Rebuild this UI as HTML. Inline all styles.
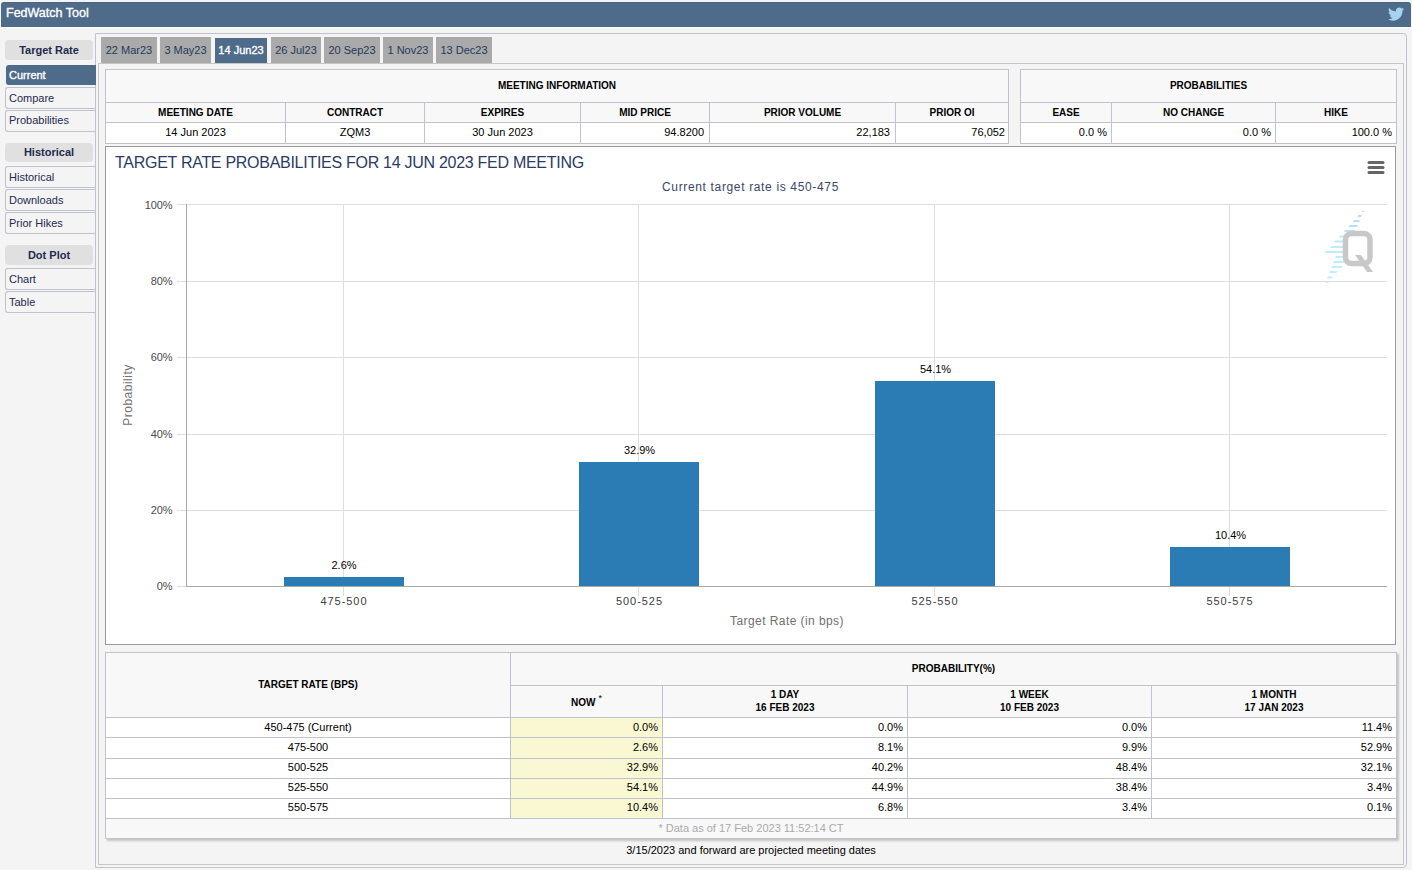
<!DOCTYPE html>
<html><head><meta charset="utf-8">
<style>
*{box-sizing:border-box;margin:0;padding:0}
html,body{width:1412px;height:870px;overflow:hidden;background:#f4f4f4;font-family:"Liberation Sans",sans-serif;position:relative}
.a{position:absolute}
#hdr{left:1px;top:2px;width:1410px;height:25px;background:#4f6b8a;border-radius:3px 3px 0 0;border-top:1px solid #4a6584;box-shadow:0 1px 0 #fff}
#hdr .t{left:5px;top:3px;color:#fff;font:12.5px "Liberation Sans",sans-serif;-webkit-text-stroke:0.35px #fff;white-space:nowrap}
.gh{left:5px;width:88px;height:20px;background:#e0e0e0;border-radius:4px;color:#1f2a50;font:bold 11px "Liberation Sans",sans-serif;text-align:center;line-height:20px}
.sb{left:5px;width:91px;height:22px;background:#f4f4f4;border:1px solid #c0c2cf;border-right:none;border-radius:3px 0 0 3px;color:#1f2a50;font:11px "Liberation Sans",sans-serif;line-height:20px;padding-left:3px}
.sb.on{z-index:2;background:#4f6b8a;border-color:#4f6b8a;color:#fff;-webkit-text-stroke:0.35px #fff;top:65px;height:20px;line-height:19px;padding-left:2px;left:6px;width:90px}
#outer{z-index:1;left:95px;top:33px;width:1312px;height:835px;border:1px solid #c0c2ce;border-radius:0 4px 4px 0}
#panel{left:98px;top:63px;width:1306px;height:802px;border:1px solid #c6c6c6;background:#f4f4f4}
.tab{top:37px;height:26px;background:#aaaaaa;color:#1f3a5a;font:11px "Liberation Sans",sans-serif;line-height:26px;text-align:center;white-space:nowrap}
.tab.on{top:38px;height:25px;background:#4f6b8a;color:#fff;-webkit-text-stroke:0.35px #fff;line-height:25px}
table{border-collapse:collapse;font-family:"Liberation Sans",sans-serif}
td,th{border:1px solid #c0c2cf;padding:0;white-space:nowrap}
.mt{position:absolute;background:#f8f8f8}
.mt th{font:bold 10px "Liberation Sans",sans-serif;color:#000;text-align:center}
.mt td{font:11px "Liberation Sans",sans-serif;color:#000;background:#fff;padding-bottom:2px}
.bt td{text-align:right;padding-right:4px;padding-bottom:2px}
.bt td:first-child{text-align:center;padding-right:0}
.bt td.y{background:#f9f8d2}
.bt tr.up td{padding-bottom:3px}
.bt sup{font-size:9px;vertical-align:top;position:relative;top:-4px;margin-left:3px;font-weight:normal}
.bt th.ft{font:11px "Liberation Sans",sans-serif;color:#aaa;padding-bottom:2px}
#chart{left:105px;top:146px;width:1291px;height:499px;border:1px solid #9a9a9a;background:#fff;overflow:hidden}
</style></head><body>
<div id="hdr" class="a"><div class="a t">FedWatch Tool</div>
<svg class="a" style="left:1387px;top:4px" width="16.5" height="14.5" viewBox="0 0 24 20"><path fill="#a7d3f3" d="M23.6 2.4c-.9.4-1.8.6-2.8.8 1-.6 1.8-1.6 2.1-2.7-.9.6-2 1-3.1 1.2C18.9.7 17.6.1 16.2.1c-2.7 0-4.8 2.2-4.8 4.8 0 .4 0 .8.1 1.1C7.4 5.8 3.9 3.9 1.5 1 1.1 1.7.9 2.5.9 3.4c0 1.7.9 3.2 2.2 4-.8 0-1.5-.2-2.2-.6v.1c0 2.3 1.7 4.3 3.9 4.7-.4.1-.8.2-1.3.2-.3 0-.6 0-.9-.1.6 1.9 2.4 3.3 4.5 3.4-1.7 1.3-3.7 2.1-6 2.1-.4 0-.8 0-1.2-.1 2.1 1.4 4.7 2.2 7.4 2.2 8.9 0 13.7-7.4 13.7-13.7v-.6c1-.7 1.8-1.6 2.5-2.6z"/></svg>
</div>

<div id="outer" class="a"></div>

<div class="a gh" style="top:40px">Target Rate</div>
<div class="a sb on">Current</div>
<div class="a sb" style="top:87px">Compare</div>
<div class="a sb" style="top:110px;line-height:19px">Probabilities</div>
<div class="a gh" style="top:143px;height:19px;line-height:19px">Historical</div>
<div class="a sb" style="top:166px">Historical</div>
<div class="a sb" style="top:189px">Downloads</div>
<div class="a sb" style="top:212px">Prior Hikes</div>
<div class="a gh" style="top:245px">Dot Plot</div>
<div class="a sb" style="top:268px">Chart</div>
<div class="a sb" style="top:291px">Table</div>

<div id="panel" class="a"></div>

<div class="a tab" style="left:101px;width:56px">22 Mar23</div>
<div class="a tab" style="left:160px;width:51px">3 May23</div>
<div class="a tab on" style="left:215px;width:52px">14 Jun23</div>
<div class="a tab" style="left:271px;width:50px">26 Jul23</div>
<div class="a tab" style="left:324px;width:56px">20 Sep23</div>
<div class="a tab" style="left:383px;width:50px">1 Nov23</div>
<div class="a tab" style="left:436px;width:56px">13 Dec23</div>

<!-- MEETING INFO -->
<table class="mt" style="left:105px;top:69px;width:904px">
<tr style="height:33px"><th colspan="6" style="padding-bottom:2px">MEETING INFORMATION</th></tr>
<tr style="height:20px"><th style="width:180px">MEETING DATE</th><th style="width:139px">CONTRACT</th><th style="width:156px">EXPIRES</th><th style="width:129px">MID PRICE</th><th style="width:186px">PRIOR VOLUME</th><th>PRIOR OI</th></tr>
<tr style="height:21px"><td style="text-align:center">14 Jun 2023</td><td style="text-align:center">ZQM3</td><td style="text-align:center">30 Jun 2023</td><td style="text-align:right;padding-right:5px">94.8200</td><td style="text-align:right;padding-right:5px">22,183</td><td style="text-align:right;padding-right:3px">76,052</td></tr>
</table>

<table class="mt" style="left:1020px;top:69px;width:377px">
<tr style="height:33px"><th colspan="3" style="padding-bottom:2px">PROBABILITIES</th></tr>
<tr style="height:20px"><th style="width:91px">EASE</th><th style="width:164px">NO CHANGE</th><th>HIKE</th></tr>
<tr style="height:21px"><td style="text-align:right;padding-right:4px">0.0 %</td><td style="text-align:right;padding-right:4px">0.0 %</td><td style="text-align:right;padding-right:4px">100.0 %</td></tr>
</table>


<!-- BOTTOM TABLE -->
<table class="mt bt" style="left:105px;top:652px;width:1292px;box-shadow:2px 2px 2px rgba(0,0,0,0.2)">
<tr style="height:33px"><th rowspan="2" style="width:405px;padding-bottom:2px">TARGET RATE (BPS)</th><th colspan="4" style="padding-bottom:2px">PROBABILITY(%)</th></tr>
<tr style="height:32px"><th style="width:152px;padding-top:2px">NOW<sup>*</sup></th><th style="width:245px;line-height:13px;padding-bottom:2px">1 DAY<br>16 FEB 2023</th><th style="width:244px;line-height:13px;padding-bottom:2px">1 WEEK<br>10 FEB 2023</th><th style="line-height:13px;padding-bottom:2px">1 MONTH<br>17 JAN 2023</th></tr>
<tr style="height:20px"><td>450-475 (Current)</td><td class="y">0.0%</td><td>0.0%</td><td>0.0%</td><td>11.4%</td></tr>
<tr style="height:21px"><td>475-500</td><td class="y">2.6%</td><td>8.1%</td><td>9.9%</td><td>52.9%</td></tr>
<tr style="height:20px" class="up"><td>500-525</td><td class="y">32.9%</td><td>40.2%</td><td>48.4%</td><td>32.1%</td></tr>
<tr style="height:20px" class="up"><td>525-550</td><td class="y">54.1%</td><td>44.9%</td><td>38.4%</td><td>3.4%</td></tr>
<tr style="height:20px" class="up"><td>550-575</td><td class="y">10.4%</td><td>6.8%</td><td>3.4%</td><td>0.1%</td></tr>
<tr style="height:20px"><th colspan="5" class="ft">* Data as of 17 Feb 2023 11:52:14 CT</th></tr>
</table>
<div class="a" style="left:105px;top:842px;width:1292px;text-align:center;font:11px 'Liberation Sans',sans-serif;color:#000;line-height:16px">3/15/2023 and forward are projected meeting dates</div>

<div id="chart" class="a"></div>
<svg class="a" style="left:0;top:0" width="1412" height="870" viewBox="0 0 1412 870" font-family="Liberation Sans, sans-serif">
<g shape-rendering="crispEdges">
<!-- horizontal grid -->
<g fill="#dedede">
<rect x="177" y="204" width="1210" height="1"/>
<rect x="177" y="281" width="1210" height="1"/>
<rect x="177" y="357" width="1210" height="1"/>
<rect x="177" y="434" width="1210" height="1"/>
<rect x="177" y="510" width="1210" height="1"/>
<rect x="177" y="586" width="10" height="1"/>
</g>
<!-- vertical grid + ticks -->
<g fill="#dedede">
<rect x="343" y="204" width="1" height="392"/>
<rect x="638" y="204" width="1" height="392"/>
<rect x="934" y="204" width="1" height="392"/>
<rect x="1229" y="204" width="1" height="392"/>
</g>
<!-- bars -->
<g fill="#2b7bb5">
<rect x="284" y="577" width="120" height="10"/>
<rect x="579" y="462" width="120" height="125"/>
<rect x="875" y="381" width="120" height="206"/>
<rect x="1170" y="547" width="120" height="40"/>
</g>
<!-- axes -->
<rect x="186" y="204" width="1" height="383" fill="#a8a8a8"/>
<rect x="186" y="586" width="1201" height="1" fill="#a8a8a8"/>
</g>
<!-- title -->
<text x="115" y="168" font-size="16" fill="#2a3b64" letter-spacing="-0.28">TARGET RATE PROBABILITIES FOR 14 JUN 2023 FED MEETING</text>
<text x="750.5" y="191" font-size="12" fill="#3a4869" text-anchor="middle" letter-spacing="0.65">Current target rate is 450-475</text>
<!-- y labels -->
<g font-size="11" fill="#4a4a4a" text-anchor="end" letter-spacing="-0.1">
<text x="172.5" y="209">100%</text>
<text x="172.5" y="285">80%</text>
<text x="172.5" y="361">60%</text>
<text x="172.5" y="438">40%</text>
<text x="172.5" y="514">20%</text>
<text x="172.5" y="590">0%</text>
</g>
<text transform="translate(132,395) rotate(-90)" font-size="12" fill="#707070" text-anchor="middle" letter-spacing="0.5">Probability</text>
<!-- data labels -->
<g font-size="11" fill="#000" text-anchor="middle">
<text x="344" y="569">2.6%</text>
<text x="639.5" y="454">32.9%</text>
<text x="935.5" y="373">54.1%</text>
<text x="1230.5" y="539">10.4%</text>
</g>
<!-- x labels -->
<g font-size="11" fill="#404040" text-anchor="middle" letter-spacing="0.95">
<text x="344" y="605">475-500</text>
<text x="639.5" y="605">500-525</text>
<text x="935" y="605">525-550</text>
<text x="1230" y="605">550-575</text>
</g>
<text x="787" y="625" font-size="12" fill="#707070" text-anchor="middle" letter-spacing="0.43">Target Rate (in bps)</text>
<!-- menu -->
<g stroke="#666" stroke-width="3" stroke-linecap="round">
<line x1="1369" y1="162.5" x2="1383" y2="162.5"/>
<line x1="1369" y1="167.5" x2="1383" y2="167.5"/>
<line x1="1369" y1="172.5" x2="1383" y2="172.5"/>
</g>
<!-- Q logo -->
<defs><linearGradient id="qg" x1="0" y1="0" x2="0" y2="1"><stop offset="0" stop-color="#b2d6f8"/><stop offset="0.45" stop-color="#bdebfb"/><stop offset="1" stop-color="#c2f0fd"/></linearGradient></defs><path fill="url(#qg)" d="M1362.5 211h2l-1 1h-2zM1358.5 215h3.5l-1 2h-3.5zM1354 220h6l-1 2h-6zM1349.5 225h8.5l-1 2h-8.5zM1345 230h10l-1 2h-10zM1340 235.5h10l-1 2h-10zM1335 240.5h12l-1 2h-12zM1331 246h15l-1 2h-15zM1326 251h18l-1 2h-18zM1336 256h10l-1 2h-10zM1334 261h11l-1 2h-11zM1332 266h10.5l-1 2h-10.5zM1330 271h7.5l-1 2h-7.5zM1328 276.5h5l-1 2h-5zM1326 282h3l-1 1h-3z"/>
<g fill="none" stroke="#c8c8c8" stroke-width="5.5">
<rect x="1345.5" y="233.5" width="24.5" height="30" rx="6"/>
</g>
<path d="M1355 255 L1361 255 L1373 272 L1367 272 Z" fill="#c8c8c8"/>
</svg>

</body></html>
